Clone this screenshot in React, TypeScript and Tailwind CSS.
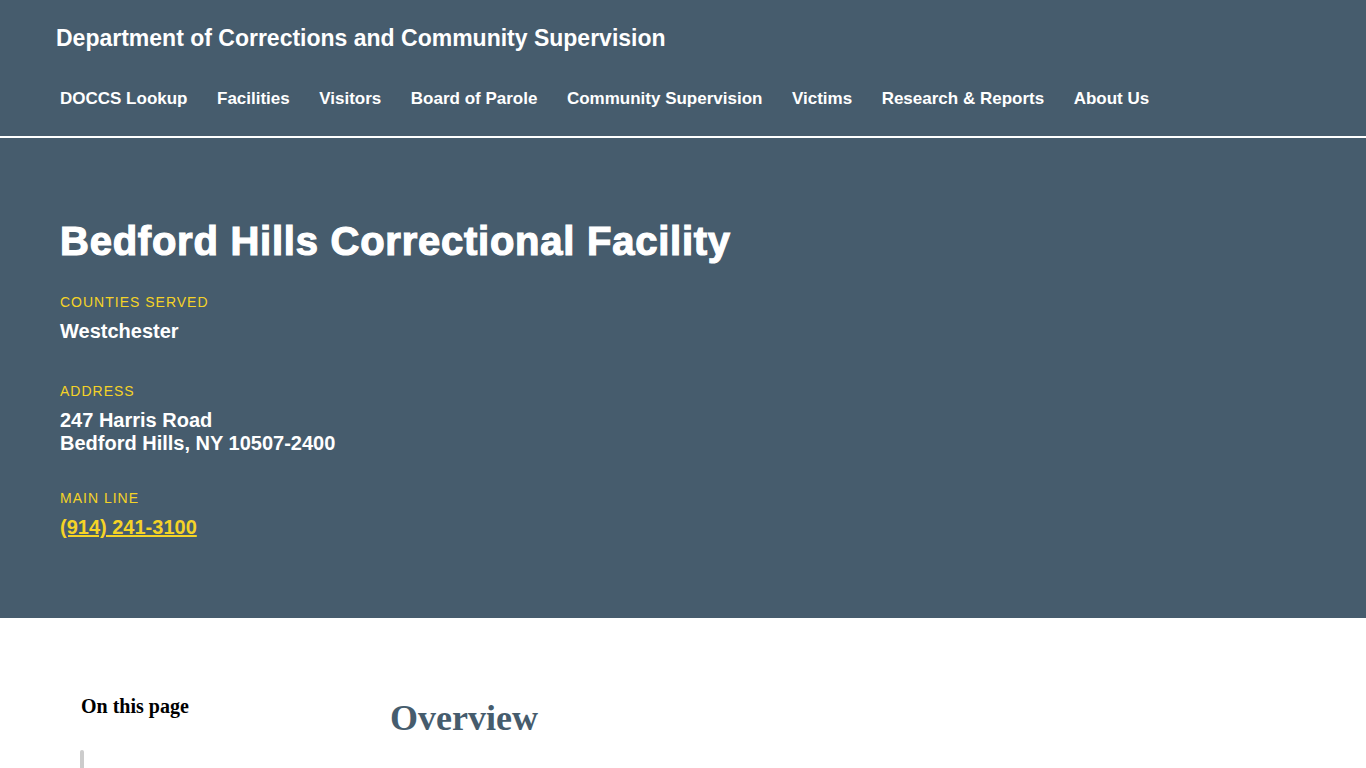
export default function App() {
  const nav = [
    'DOCCS Lookup',
    'Facilities',
    'Visitors',
    'Board of Parole',
    'Community Supervision',
    'Victims',
    'Research & Reports',
    'About Us',
  ]

  return (
    <div className="min-h-screen bg-white" style={{ fontFamily: '"Liberation Sans", Arial, sans-serif' }}>
      {/* Top header */}
      <header className="bg-[#465c6d] border-b-2 border-white">
        <div className="px-[56px] pt-[24px]">
          <div className="text-[23px] font-bold text-white leading-[28px]">
            Department of Corrections and Community Supervision
          </div>
        </div>
        <nav className="flex items-center gap-[29.5px] px-[60px] pt-[37px] pb-[27px]">
          {nav.map((item) => (
            <a key={item} className="text-[17px] font-bold text-white leading-[20px]">
              {item}
            </a>
          ))}
        </nav>
      </header>

      {/* Hero */}
      <section className="bg-[#465c6d] h-[480px] px-[60px] pt-[79px]">
        <h1 className="text-[40px] font-black text-white leading-[48px] tracking-[0.75px] [-webkit-text-stroke:1.2px_white]">
          Bedford Hills Correctional Facility
        </h1>
        <div className="mt-[28px]">
          <div className="text-[14px] text-[#f5d327] tracking-[1px] leading-[18px]">COUNTIES SERVED</div>
          <div className="mt-[9px] text-[20px] font-bold text-white leading-[23px]">Westchester</div>
        </div>
        <div className="mt-[39px]">
          <div className="text-[14px] text-[#f5d327] tracking-[1px] leading-[18px]">ADDRESS</div>
          <div className="mt-[9px] text-[20px] font-bold text-white leading-[23px]">
            247 Harris Road
            <br />
            Bedford Hills, NY 10507-2400
          </div>
        </div>
        <div className="mt-[34px]">
          <div className="text-[14px] text-[#f5d327] tracking-[1px] leading-[18px]">MAIN LINE</div>
          <a className="inline-block mt-[9px] text-[20px] font-bold text-[#f5d327] underline leading-[23px]">
            (914) 241-3100
          </a>
        </div>
      </section>

      {/* Body */}
      <div className="flex px-[80px] pt-[75px]" style={{ fontFamily: '"Liberation Serif", "Times New Roman", serif' }}>
        <aside className="w-[310px] shrink-0">
          <div className="pl-[1px] text-[20px] font-bold text-black leading-[26px]">On this page</div>
          <div className="mt-[31px] w-[4px] h-[40px] bg-[#cccccc] rounded-[2px]" />
        </aside>
        <main className="pt-[4px]">
          <h2 className="text-[36px] font-bold text-[#465c6d] leading-[42px]">Overview</h2>
        </main>
      </div>
    </div>
  )
}
